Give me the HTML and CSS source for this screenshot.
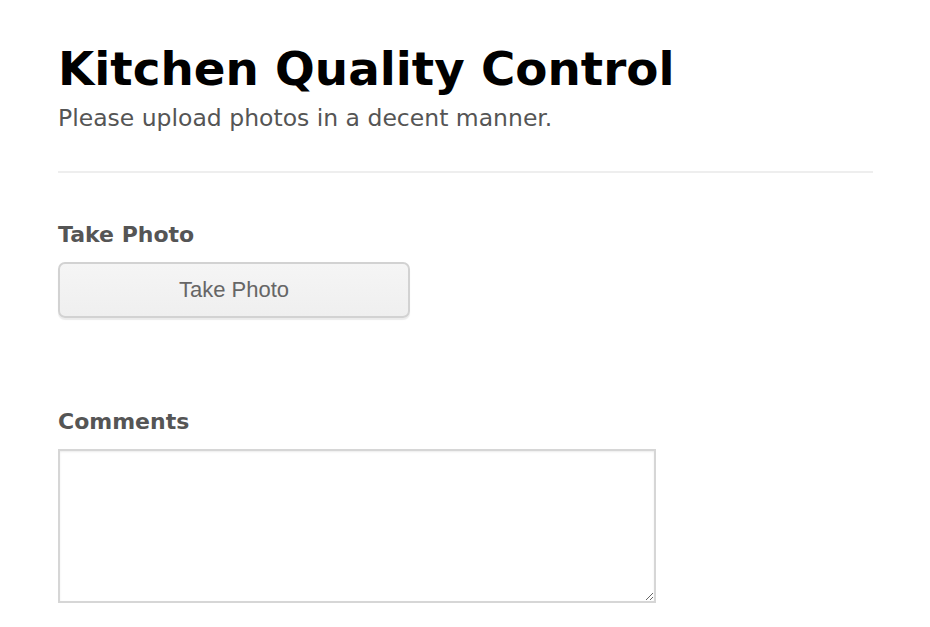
FILE: index.html
```html
<!DOCTYPE html>
<html lang="en">
<head>
    <meta charset="UTF-8">
    <meta name="viewport" content="width=device-width, initial-scale=1.0">
    <title>Kitchen Quality Control</title>
    <link rel="stylesheet" href="styles.css">
</head>
<body>
    <div class="page">
        <header class="page-header">
            <h1>Kitchen Quality Control</h1>
            <p class="subtitle">Please upload photos in a decent manner.</p>
        </header>

        <form class="qc-form">
            <div class="field">
                <label class="field-label" for="photoInput">Take Photo</label>
                <button type="button" class="photo-button" id="photoInput">Take Photo</button>
            </div>

            <div class="field field-comments">
                <label class="field-label" for="comments">Comments</label>
                <textarea id="comments" class="comments-box"></textarea>
            </div>
        </form>
    </div>
</body>
</html>
```

FILE: styles.css
```css
:root {
    --text: #000;
    --muted: #555;
    --border: #ccc;
}

body {
    margin: 0;
    background: #fff;
    font-family: 'DejaVu Sans', sans-serif;
    color: var(--text);
}

.page {
    padding: 40px 57px 0 58px;
}

.page-header {
    padding-bottom: 37px;
    border-bottom: 2px solid #eee;
}

h1 {
    font-size: 46.8px;
    font-weight: bold;
    margin: 0;
    line-height: 58px;
}

.subtitle {
    margin: 4px 0 0;
    font-size: 23.5px;
    color: var(--muted);
    line-height: 32px;
}

.qc-form {
    padding-top: 47px;
}

.field {
    display: flex;
    flex-direction: column;
    align-items: flex-start;
}

.field-label {
    font-size: 22px;
    font-weight: bold;
    color: var(--muted);
    line-height: 30px;
    margin-bottom: 12px;
}

.photo-button {
    width: 352px;
    height: 56px;
    font-family: 'Liberation Sans', Arial, sans-serif;
    font-size: 22px;
    color: #666;
    background: linear-gradient(#f5f5f5, #efefef);
    border: 2px solid #d2d2d2;
    border-radius: 7px;
    box-shadow: 0 2px 1px rgba(0,0,0,0.08);
    cursor: pointer;
}

.field-comments {
    margin-top: 89px;
}

.comments-box {
    width: 598px;
    height: 154px;
    box-sizing: border-box;
    border: 2px solid #d6d6d6;
    box-shadow: inset 0 1px 2px rgba(0,0,0,0.08);
    font-family: 'DejaVu Sans', sans-serif;
    font-size: 16px;
    margin: 0;
}
```
